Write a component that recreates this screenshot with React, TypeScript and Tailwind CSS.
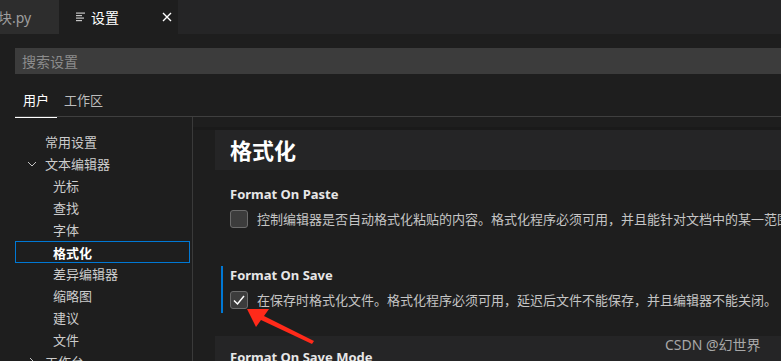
import React from 'react'

const font = { fontFamily: '"Noto Sans", "Noto Sans CJK SC", sans-serif' }

const treeItems: { label: string; indent: 'top' | 'child'; chevron?: 'down' | 'right'; selected?: boolean }[] = [
  { label: '常用设置', indent: 'top' },
  { label: '文本编辑器', indent: 'top', chevron: 'down' },
  { label: '光标', indent: 'child' },
  { label: '查找', indent: 'child' },
  { label: '字体', indent: 'child' },
  { label: '格式化', indent: 'child', selected: true },
  { label: '差异编辑器', indent: 'child' },
  { label: '缩略图', indent: 'child' },
  { label: '建议', indent: 'child' },
  { label: '文件', indent: 'child' },
  { label: '工作台', indent: 'top', chevron: 'right' }
]

function Chevron({ dir }: { dir: 'down' | 'right' }) {
  return (
    <svg width="12" height="12" viewBox="0 0 12 12" className="absolute left-[26px] top-[5px]">
      {dir === 'down' ? (
        <path d="M2 4 L6 8 L10 4" fill="none" stroke="#c5c5c5" strokeWidth="1" />
      ) : (
        <path d="M4 2 L8 6 L4 10" fill="none" stroke="#c5c5c5" strokeWidth="1" />
      )}
    </svg>
  )
}

function Checkbox({ checked }: { checked?: boolean }) {
  return (
    <div className="flex h-[18px] w-[18px] shrink-0 items-center justify-center rounded-[3px] border border-[#6b6b6b] bg-[#3c3c3c]">
      {checked && (
        <svg width="14" height="14" viewBox="0 0 14 14">
          <path d="M2 7.5 L5.5 11 L12 3" fill="none" stroke="#ffffff" strokeWidth="1.5" />
        </svg>
      )}
    </div>
  )
}

export default function App() {
  return (
    <div className="relative h-[361px] w-[781px] overflow-hidden bg-[#1e1e1e] text-[13px] text-[#cccccc]" style={font}>
      {/* tab bar */}
      <div className="flex h-[34px] bg-[#252526]">
        <div className="flex h-full w-[59px] items-center bg-[#2d2d2d] text-[#9d9d9d]">
          <span className="-ml-[2px] text-[14px]">块.py</span>
        </div>
        <div className="flex h-full w-[119px] items-center bg-[#1e1e1e] pl-[17px]">
          <svg width="10" height="10" viewBox="0 0 10 10" className="mr-[5px]">
            <rect x="0" y="0.5" width="9" height="1.2" fill="#c5c5c5" />
            <rect x="0" y="3" width="6" height="1.2" fill="#c5c5c5" />
            <rect x="0" y="5.5" width="8" height="1.2" fill="#c5c5c5" />
            <rect x="0" y="8" width="6" height="1.2" fill="#c5c5c5" />
          </svg>
          <span className="text-[14px] text-white">设置</span>
          <svg width="10" height="10" viewBox="0 0 10 10" className="ml-[43px]">
            <path d="M1 1 L9 9 M9 1 L1 9" stroke="#ffffff" strokeWidth="1.4" />
          </svg>
        </div>
      </div>

      {/* search */}
      <div className="pl-[15px] pt-[14px]">
        <div className="flex h-[26px] items-center bg-[#3c3c3c] pl-[7px] text-[14px] text-[#8c8c8c]">搜索设置</div>
      </div>

      {/* user/workspace tabs */}
      <div className="ml-[15px] mt-[16px] flex h-[27px] items-start gap-[7px] border-b border-[#3f3f3f]">
        <div className="-mb-px flex h-[28px] w-[42px] justify-center border-b border-white pt-[1px] text-white">用户</div>
        <div className="pt-[1px] text-[#bdbdbd]">工作区</div>
      </div>

      {/* body */}
      <div className="flex">
        <div className="w-[193px] shrink-0 border-r border-[#3a3a3a] pt-[14px]">
          {treeItems.map((item) => (
            <div
              key={item.label}
              className={
                'relative h-[22px] leading-[22px] ' +
                (item.selected ? 'ml-[15px] mr-[2px] border border-[#0078d4] font-bold text-white' : '')
              }
            >
              {item.chevron && <Chevron dir={item.chevron} />}
              <span
                className={
                  item.indent === 'top'
                    ? 'pl-[45px]'
                    : item.selected
                      ? 'pl-[37px] leading-[20px]'
                      : 'pl-[53px]'
                }
              >
                {item.label}
              </span>
            </div>
          ))}
        </div>

        <div className="flex-1 pt-[10px]">
          <div className="h-[3px] bg-[#1a1a1a]" />
          <div className="ml-[22px] flex h-[40px] items-center bg-[#252526] pl-[15px] text-[22px] font-bold text-white">
            格式化
          </div>

          <div className="ml-[37px] mt-[15px]">
            <div className="font-bold text-[#e7e7e7]">Format On Paste</div>
            <div className="mt-[5px] flex items-center gap-[9px]">
              <Checkbox />
              <span className="whitespace-nowrap text-[#c5c5c5]">
                控制编辑器是否自动格式化粘贴的内容。格式化程序必须可用，并且能针对文档中的某一范围进行格式化。
              </span>
            </div>
          </div>

          <div className="ml-[28px] mt-[37px] flex">
            <div className="w-[2px] shrink-0 bg-[#0078d4]" />
            <div className="pb-[3px] pl-[7px]">
              <div className="font-bold text-[#e7e7e7]">Format On Save</div>
              <div className="mt-[5px] flex items-center gap-[9px]">
                <Checkbox checked />
                <span className="whitespace-nowrap text-[#c5c5c5]">
                  在保存时格式化文件。格式化程序必须可用，延迟后文件不能保存，并且编辑器不能关闭。
                </span>
              </div>
            </div>
          </div>

          <div className="ml-[22px] mt-[23px] h-[40px] bg-[#252526] pl-[15px] pt-[12px]">
            <div className="font-bold text-[#e7e7e7]">Format On Save Mode</div>
          </div>
        </div>
      </div>

      {/* red arrow annotation */}
      <svg width="80" height="45" viewBox="0 0 80 45" className="absolute left-[244px] top-[305px]">
        <polygon points="3,4 25,4 20,11 70,36 68,39 17,15 12,22" fill="#ff2a1a" />
      </svg>

      {/* watermark */}
      <div className="absolute left-[665px] top-[334px] text-[14px] text-[#a8a8a8]">CSDN @幻世界</div>
    </div>
  )
}
